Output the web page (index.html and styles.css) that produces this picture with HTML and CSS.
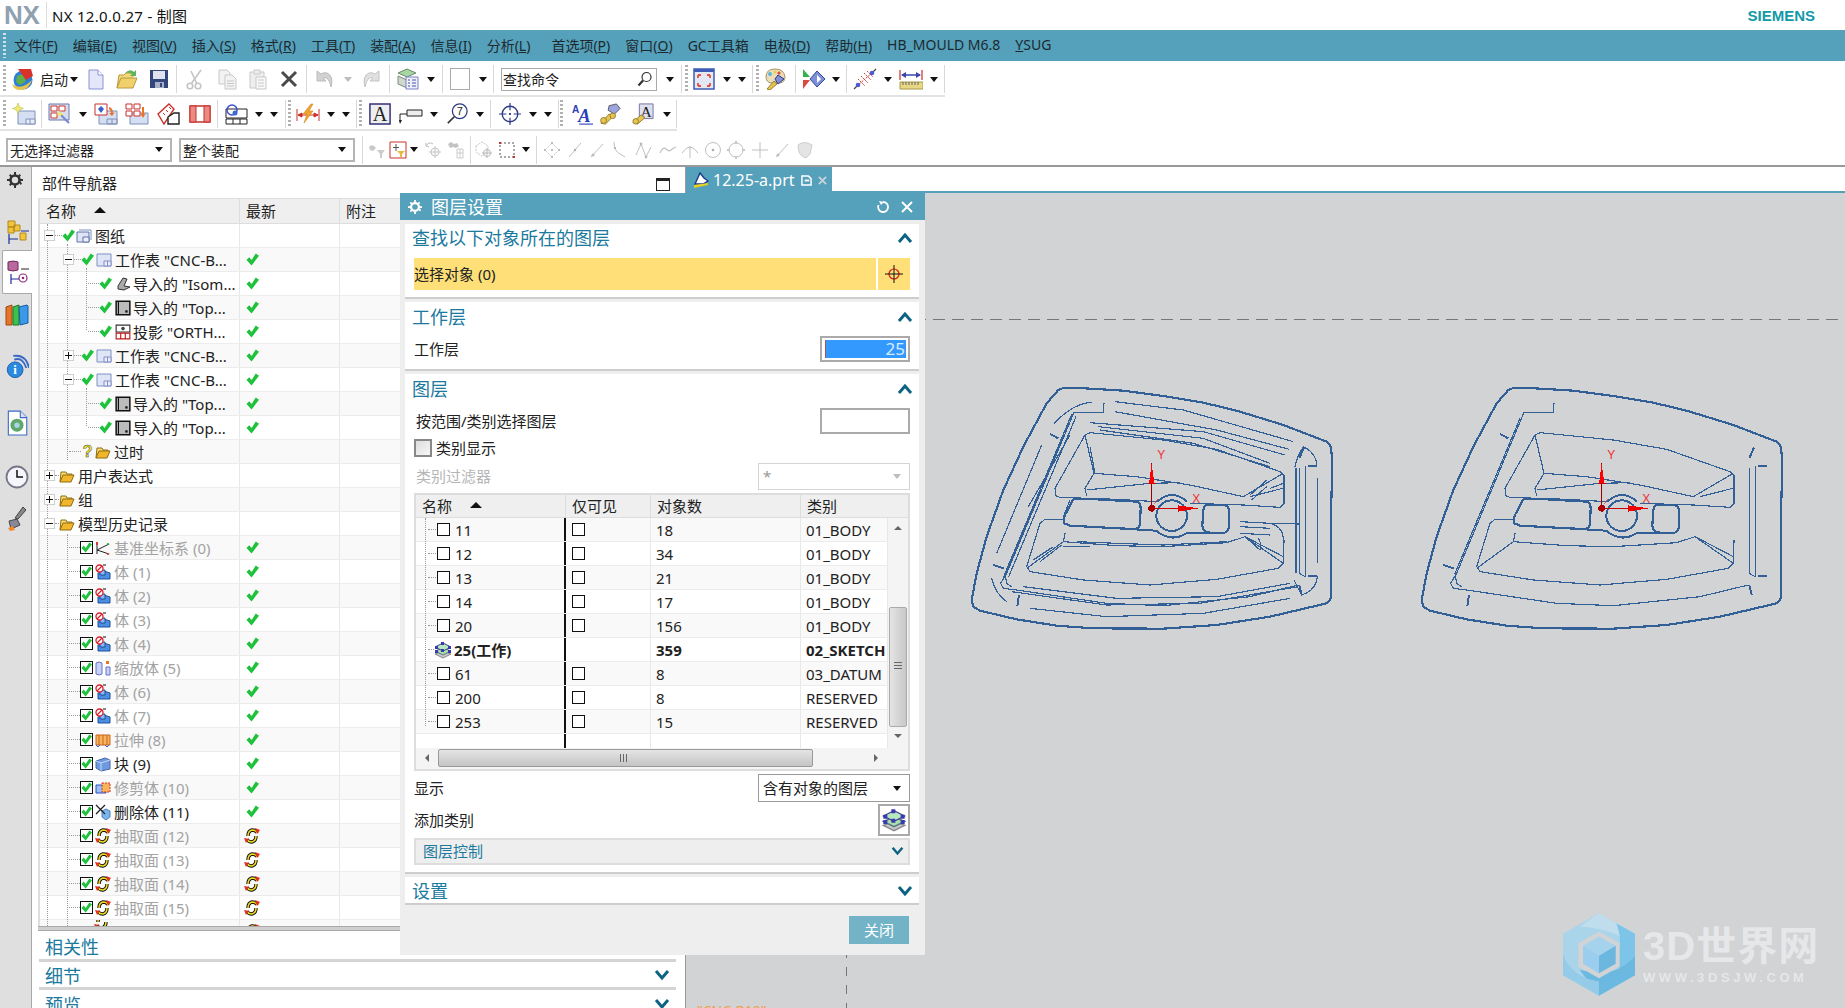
FILE: index.html
```html
<!DOCTYPE html>
<html lang="zh">
<head>
<meta charset="utf-8">
<title>NX 12.0.0.27 - 制图</title>
<link rel="stylesheet" href="styles.css">
</head>
<body>
<svg class="sprite" xmlns="http://www.w3.org/2000/svg">
<defs>
<symbol id="start" viewBox="0 0 24 22"><circle cx="12" cy="12" r="9.500" fill="#2f7fd6"/><path d="M6 8q5-3 9 0l-1 6-5 3-4-3z" fill="#5fb04a"/><path d="M7 1l13 0 2 7-7 4z" fill="#d8322a"/><path d="M1 16q9 7 20-4-3 10-12 10-6 0-8-6z" fill="#e8c24a"/></symbol>
<symbol id="new" viewBox="0 0 22 22"><path d="M4 2h9l5 5v14H4z" fill="#e4e7fa" stroke="#8d92d4"/><path d="M13 2v5h5" fill="#fff" stroke="#8d92d4"/></symbol>
<symbol id="open" viewBox="0 0 22 22"><path d="M1 20l2-13h5l2-2h7v4" fill="#f4d77a" stroke="#b89a3c"/><path d="M1 20h16l4-10H5z" fill="#f1d06c" stroke="#b89a3c"/><path d="M9 5q5-5 9-1l2-2v6h-6l2-2q-3-2-7-1z" fill="#5fb35a"/></symbol>
<symbol id="save" viewBox="0 0 22 22"><path d="M2 2h18v18H2z" fill="#33477f"/><path d="M5 3h12v8H5z" fill="#dfe3ee"/><path d="M7 14h9v6H7z" fill="#a9b2c9"/><path d="M12 15h2v4h-2z" fill="#33477f"/></symbol>
<symbol id="cut" viewBox="0 0 22 22"><g fill="none" stroke="#c4c4c4" stroke-width="1.600"><circle cx="6" cy="18" r="2.800"/><circle cx="14" cy="18" r="2.800"/><path d="M7 16L17 2M13 16L7 3"/></g></symbol>
<symbol id="copy" viewBox="0 0 22 22"><g fill="#f2f2f2" stroke="#c8c8c8"><path d="M3 2h8l3 3v11H3z"/><path d="M9 7h7l4 4v10H9z"/><path d="M11 13h7M11 15.500h7M11 18h7" fill="none"/></g></symbol>
<symbol id="paste" viewBox="0 0 22 22"><g fill="#eee" stroke="#c8c8c8"><path d="M3 4h14v16H3z"/><path d="M7 2h6v4H7z"/><path d="M9 9h10v12H9z" fill="#f8f8f8"/><path d="M11 12h6M11 15h6M11 18h6" fill="none"/></g></symbol>
<symbol id="del" viewBox="0 0 22 22"><path d="M4 4l14 14M18 4L4 18" stroke="#4a4a4a" stroke-width="3"/></symbol>
<symbol id="undo" viewBox="0 0 22 22"><path d="M3 3v10h9l-3-3q6-2 8 9 3-11-4-14-3-1-6 1z" fill="#d2d2d2" stroke="#bbb"/></symbol>
<symbol id="redo" viewBox="0 0 22 22"><path d="M19 3v10h-9l3-3q-6-2-8 9-3-11 4-14 3-1 6 1z" fill="#e0e0e0" stroke="#c4c4c4"/></symbol>
<symbol id="layers" viewBox="0 0 22 22"><path d="M1 5l9-4 9 4-9 4z" fill="#a8d6a0" stroke="#6a8a70"/><path d="M1 8l9 4 3-1v8l-3 1-9-4z" fill="#cfd8cf" stroke="#7a8a7a"/><path d="M9 9h12v12H9z" fill="#eef0fb" stroke="#7b80c4"/><path d="M11 12h2M15 12h4M11 15h2M15 15h4M11 18h2M15 18h4" stroke="#4a55a8"/></symbol>
<symbol id="mag" viewBox="0 0 16 16"><circle cx="9.500" cy="6" r="4.500" fill="#fff" stroke="#333" stroke-width="1.200"/><path d="M6 9.500L1.500 14.500" stroke="#333" stroke-width="2.200"/></symbol>
<symbol id="fit" viewBox="0 0 22 22"><path d="M1 1h20v20H1z" fill="#e3e8f4" stroke="#3f5cb6" stroke-width="1.500"/><path d="M1 1h20v3H1z" fill="#3f5cb6"/><path d="M5 7h3M5 7v3M17 7h-3M17 7v3M5 18h3M5 18v-3M17 18h-3M17 18v-3" stroke="#e2503a" stroke-width="1.800" fill="none"/></symbol>
<symbol id="palette" viewBox="0 0 24 22"><path d="M2 9q0-8 9-8t10 8q0 5-5 6-5-2-9 0-5-1-5-6z" fill="#ecdcb8" stroke="#a89668"/><circle cx="6" cy="6" r="2" fill="#57b8e0"/><circle cx="11" cy="4" r="1.600" fill="#e8d14a"/><circle cx="15" cy="5" r="1.600" fill="#d84a4a"/><path d="M14 7l6 4-6 5-3-5z" fill="#7f8fd8" stroke="#333c86"/><path d="M3 21l7-8 3 3-7 6z" fill="#e6c14e" stroke="#9b8230"/></symbol>
<symbol id="play" viewBox="0 0 24 22"><path d="M1 1l7 8H1z" fill="#33b44a"/><path d="M1 12h7l-7 9z" fill="#d94a42"/><path d="M15 3l8 8-8 8-7-8z" fill="#7c8fd8" stroke="#39459a"/><path d="M15 7l4 4-4 4z" fill="#fff"/></symbol>
<symbol id="grid" viewBox="0 0 24 22"><path d="M4 18L20 4M8 8l7 7M5 11l7 7M11 5l7 7M14 3l6 6" stroke="#d8403a" stroke-dasharray="2 1" fill="none"/><path d="M1 21l4-4M19 5l4-4" stroke="#444" stroke-width="1.200"/><circle cx="5" cy="17" r="2.300" fill="#4e5ad0"/><circle cx="19" cy="5" r="2.300" fill="#4e5ad0"/></symbol>
<symbol id="ruler" viewBox="0 0 24 22"><path d="M1 2v10M23 2v10" stroke="#c9302a" stroke-width="1.200"/><path d="M3 7h18" stroke="#3a46b0" stroke-width="1.500"/><path d="M2 7l5-3v6zM22 7l-5-3v6z" fill="#3a46b0"/><path d="M1 14h23v7H1z" fill="#e8d883" stroke="#a89a4c"/><path d="M4 14v3M7 14v3M10 14v3M13 14v3M16 14v3M19 14v3" stroke="#666"/></symbol>
<symbol id="newsheet" viewBox="0 0 24 22"><path d="M6 8h17v13H6z" fill="#d5dff2" stroke="#7e90bb"/><path d="M14 16h9v5h-9zM18 16v5" fill="#e7ecf7" stroke="#7e90bb"/><path d="M6 0l1.500 4 4 1.500-4 1.500L6 11 4.500 7 .5 5.500l4-1.500z" fill="#f2ea6a" stroke="#a8b35a" stroke-width=".5"/></symbol>
<symbol id="s1" viewBox="0 0 24 22"><path d="M1 1h20v16H1z" fill="#d8ddf0" stroke="#6b78b0"/><path d="M3 3h6v5H3zM11 3h6v5h-6zM3 10h6v5H3z" fill="#fff" stroke="#d0392f"/><path d="M11 10l10 10" stroke="#7a8ad8" stroke-width="2.200"/><path d="M12 7l1 3 3 1-3 1-1 3-1-3-3-1 3-1z" fill="#f2ea6a"/></symbol>
<symbol id="s2" viewBox="0 0 24 22"><path d="M5 8h18v13H5z" fill="#d5dff2" stroke="#7e90bb"/><path d="M1 1h12v11H1z" fill="#fff" stroke="#c9302a"/><path d="M4 6l3-3 3 3-3 4z" fill="#3a5ec8"/><path d="M15 4q4 1 4 6l2-1-3 4-3-3 2 0q0-3-2-4z" fill="#e8742a"/><path d="M13 16h10v5H13zM18 16v5" fill="none" stroke="#7e90bb"/></symbol>
<symbol id="s3" viewBox="0 0 24 22"><path d="M5 10h18v11H5z" fill="#d5dff2" stroke="#7e90bb"/><path d="M1 1h6v5H1zM9 1h6v5H9zM1 8h6v5H1zM9 8h6v5H9z" fill="#fff" stroke="#c9302a"/><path d="M19 4v7l2-1-3 5-3-5 2 1V4z" fill="#e8742a"/></symbol>
<symbol id="s4" viewBox="0 0 24 22"><path d="M1 11L12 1l5 5L7 21z" fill="#fff" stroke="#c9302a" stroke-width="1.400"/><path d="M6 10l2 2M9 7l2 2M12 4l2 2" stroke="#c9302a"/><path d="M11 21v-7l6-4h5v11z" fill="#fff" stroke="#222" stroke-width="1.400"/></symbol>
<symbol id="s5" viewBox="0 0 24 22"><path d="M2 3h20v16H2z" fill="#fff" stroke="#c9302a" stroke-width="1.400"/><path d="M2 3h6v16H2zM16 3h6v16h-6z" fill="#e98a84" stroke="#c9302a"/></symbol>
<symbol id="s6" viewBox="0 0 24 22"><path d="M2 6h21v9H2zM2 16h21v5H2zM9 16v5M16 16v5" fill="#fff" stroke="#222"/><circle cx="8" cy="7" r="5" fill="none" stroke="#3a4ec8" stroke-width="1.500"/><circle cx="11" cy="10" r="2.500" fill="#3a6ad0"/></symbol>
<symbol id="bolt" viewBox="0 0 24 22"><path d="M1 6v12M23 6v12" stroke="#c9302a"/><path d="M2 12h20M2 12l4-2v4zM22 12l-4-2v4z" stroke="#c9302a" fill="#c9302a"/><path d="M15 1L7 11h4l-3 9 9-12h-4l4-7z" fill="#f0a42c" stroke="#d8821c" stroke-width=".6"/></symbol>
<symbol id="abox" viewBox="0 0 24 24"><path d="M1 1h22v22H1z" fill="#eee" stroke="#34307a" stroke-width="1.600"/><text x="12" y="20" text-anchor="middle" font-family="Liberation Serif" font-size="22" fill="#222">A</text></symbol>
<symbol id="leader" viewBox="0 0 24 22"><path d="M8 7h15v6H8z" fill="#eee" stroke="#222"/><path d="M8 11H1v8" stroke="#222" fill="none"/><path d="M1 21l-1-4h3z" fill="#222"/></symbol>
<symbol id="balloon" viewBox="0 0 24 24"><circle cx="15" cy="9" r="8" fill="#fff" stroke="#2e3a86" stroke-width="1.400"/><text x="15" y="13" text-anchor="middle" font-family="Liberation Sans" font-size="12" fill="#222">7</text><path d="M9 15L2 22" stroke="#333" stroke-width="1.800"/></symbol>
<symbol id="target" viewBox="0 0 24 24"><circle cx="12" cy="12" r="8.500" fill="none" stroke="#2e3a86" stroke-width="1.500"/><path d="M12 0v8M12 16v8M0 12h8M16 12h8" stroke="#2e3a86" stroke-width="1.300"/><path d="M11 11h2v2h-2z" fill="#2e3a86"/></symbol>
<symbol id="aa" viewBox="0 0 24 24"><text x="1" y="11" font-family="Liberation Sans" font-weight="700" font-size="11" fill="#2a3db8">A</text><text x="8" y="21" font-family="Liberation Serif" font-style="italic" font-weight="700" font-size="20" fill="#2a3db8">A</text><path d="M9 23h15" stroke="#2a3db8" stroke-width="1.200"/></symbol>
<symbol id="wrench" viewBox="0 0 24 24"><path d="M11 3l8-2 4 5-6 6-7-4z" fill="#9aa4e0" stroke="#555"/><path d="M2 22l9-10 4 3-8 8z" fill="#e9c550" stroke="#8e7a2c"/><circle cx="5" cy="19" r="3.200" fill="#e9c550" stroke="#8e7a2c"/><circle cx="15" cy="14" r="3" fill="#e9c550" stroke="#8e7a2c"/></symbol>
<symbol id="wrencha" viewBox="0 0 24 24"><path d="M8 1h15v16H8z" fill="#dfe0ee" stroke="#6b6b9a"/><text x="15.500" y="15" text-anchor="middle" font-family="Liberation Serif" font-size="17" fill="#222">A</text><path d="M1 21l9-8 4 3-8 7z" fill="#e9c550" stroke="#8e7a2c"/><circle cx="4" cy="20" r="3" fill="#e9c550" stroke="#8e7a2c"/></symbol>
<symbol id="g1" viewBox="0 0 18 18"><path d="M1 6q2-3 5-1l2 2-3 3-3-1z" fill="#c8c8c8"/><path d="M9 9h8l-3 4v4h-2v-4z" fill="#ccc"/></symbol>
<symbol id="g2" viewBox="0 0 18 18"><path d="M1 1h16v16H1z" fill="#fff" stroke="#c9302a"/><path d="M7 3v7M4 6.500h6" stroke="#555"/><path d="M8 10h8l-3 3v3h-2v-3z" fill="#e9b93a"/></symbol>
<symbol id="g3" viewBox="0 0 18 18"><path d="M2 5q3-5 7-2M2 5l3 1M2 5V2" stroke="#bbb" fill="none"/><circle cx="11" cy="11" r="4" fill="none" stroke="#c4c4c4"/><path d="M11 5v12M5 11h12" stroke="#c4c4c4"/></symbol>
<symbol id="g4" viewBox="0 0 18 18"><path d="M1 3l3-2 3 2 3-1 2 3-3 2-3-1-3 1z" fill="#c4c4c4"/><path d="M10 8h6v9h-6zM10 12h6M13 8v9" fill="none" stroke="#ccc"/></symbol>
<symbol id="g5" viewBox="0 0 18 18"><path d="M1 5l6-4 6 4v6l-6 4-6-4z" fill="none" stroke="#c8c8c8" stroke-dasharray="2 1"/><circle cx="12" cy="12" r="3.500" fill="none" stroke="#bbb"/><path d="M12 7v10M7 12h10" stroke="#bbb"/></symbol>
<symbol id="g6" viewBox="0 0 18 18"><path d="M2 2h14v14H2z" fill="none" stroke="#555" stroke-dasharray="2 2"/><path d="M1 1h2v2H1zM15 15h2v2h-2z" fill="#c9302a"/></symbol>
<symbol id="g7" viewBox="0 0 18 18"><path d="M9 2l7 7-7 7-7-7z" fill="none" stroke="#ccc" stroke-dasharray="2 1"/><path d="M8 1h2v2H8zM1 8h2v2H1zM15 8h2v2h-2zM8 15h2v2H8zM8 8h2v2H8z" fill="#bbb"/></symbol>
<symbol id="g8" viewBox="0 0 18 18"><path d="M3 16L15 2" stroke="#c0c0c0"/><circle cx="9" cy="9" r="1.200" fill="#aaa"/></symbol>
<symbol id="g9" viewBox="0 0 18 18"><path d="M4 1q0 9 6 12l5 3" stroke="#c0c0c0" fill="none"/><circle cx="5" cy="7" r="1" fill="#aaa"/></symbol>
<symbol id="g10" viewBox="0 0 18 18"><path d="M1 14L6 3l5 13 5-10" stroke="#c0c0c0" fill="none"/><circle cx="6" cy="3" r="1.400" fill="#bbb"/><circle cx="11" cy="16" r="1.400" fill="#bbb"/></symbol>
<symbol id="g11" viewBox="0 0 18 18"><path d="M1 12q3-7 6-4t5 1 5-3" stroke="#c0c0c0" fill="none" stroke-width="1.200"/></symbol>
<symbol id="g12" viewBox="0 0 18 18"><path d="M1 12Q9 0 17 12M9 5v12" stroke="#c0c0c0" fill="none"/></symbol>
<symbol id="g13" viewBox="0 0 18 18"><circle cx="9" cy="9" r="7.500" fill="none" stroke="#c0c0c0"/><circle cx="9" cy="9" r="1.300" fill="#aaa"/></symbol>
<symbol id="g14" viewBox="0 0 18 18"><circle cx="9" cy="9" r="7" fill="none" stroke="#c0c0c0"/><path d="M8 0h2v3H8zM8 15h2v3H8zM0 8h3v2H0zM15 8h3v2h-3z" fill="#c8c8c8"/></symbol>
<symbol id="g15" viewBox="0 0 18 18"><path d="M9 1v16M1 9h16" stroke="#c0c0c0"/></symbol>
<symbol id="g16" viewBox="0 0 18 18"><path d="M3 16L15 3" stroke="#c0c0c0"/><circle cx="5" cy="14" r="1.500" fill="#bbb"/></symbol>
<symbol id="g17" viewBox="0 0 18 18"><path d="M2 4q6-5 14 0l-2 9-4 4q-8-2-8-13z" fill="#e4e4e4" stroke="#ccc"/></symbol>

<symbol id="ok" viewBox="0 0 14 14"><path d="M.5 7.500l3-3 2.500 3L10.500.5 14 3 6 13.500z" fill="#1fc23d"/></symbol>
<symbol id="folder" viewBox="0 0 16 14"><path d="M1 13L2 3h5l1 2h5v2" fill="#f8dc78" stroke="#8c6d10"/><path d="M1 13h11l3-7H4z" fill="#f2b62c" stroke="#8c6d10"/></symbol>
<symbol id="sheet" viewBox="0 0 16 14"><path d="M1 1h14v12H1z" fill="#e0e5f5" stroke="#7f8fc4"/><path d="M8 8h7v5H8zM11.500 8v5" fill="#eef" stroke="#7f8fc4"/></symbol>
<symbol id="sheets" viewBox="0 0 16 14"><path d="M3 1h12v10" fill="none" stroke="#7f8fc4"/><path d="M1 3h12v10H1z" fill="#e0e5f5" stroke="#5f70a8"/><path d="M7 8h6v5H7z" fill="#eef" stroke="#5f70a8"/></symbol>
<symbol id="iso" viewBox="0 0 16 14"><path d="M3 9l5-8 4 1-3 7 6 1-6 3-6-1z" fill="#aaa" stroke="#333"/></symbol>
<symbol id="view" viewBox="0 0 14 14"><path d="M1 1h12v12H1z" fill="#bbb" stroke="#111" stroke-width="1.300"/><path d="M3 1v12" stroke="#111"/><path d="M9 9h2v2H9z" fill="#111"/></symbol>
<symbol id="ortho" viewBox="0 0 14 14"><path d="M1 1h12v6H1z" fill="#fff" stroke="#333"/><path d="M1 8h12v5H1zM5 8v5M9 8v5" fill="#fff" stroke="#c01818"/><circle cx="7" cy="4" r="1.600" fill="#444"/></symbol>
<symbol id="q" viewBox="0 0 12 16"><text x="6" y="14.500" text-anchor="middle" font-family="Liberation Sans" font-weight="700" font-size="18" fill="#efe02a" stroke="#444" stroke-width=".5">?</text></symbol>
<symbol id="datum" viewBox="0 0 16 14"><path d="M2 1v12M2 9l12-6M2 9l12 4" stroke="#222" fill="none"/><path d="M1 1h2v3H1z" fill="#d33"/><path d="M12 2l3 1-3 1z" fill="#2a2"/><path d="M12 12l3 1-3 1z" fill="#d33"/></symbol>
<symbol id="body" viewBox="0 0 16 16"><path d="M3 9l6-2 6 2v6H3z" fill="#4b8fe0" stroke="#1f4f9c"/><path d="M5 6h5v5H5z" fill="#8dbaf0" stroke="#1f4f9c"/><circle cx="4.500" cy="4.500" r="3.500" fill="#fff" stroke="#d8202a" stroke-width="1.300"/><path d="M2 7l5-5" stroke="#d8202a" stroke-width="1.300"/><path d="M8 1h3" stroke="#111"/></symbol>
<symbol id="scale" viewBox="0 0 16 16"><path d="M1 3q3-2 6 0v11q-3 2-6 0z" fill="#c9d2f8" stroke="#6372c8"/><path d="M11 7h4v8h-4z" fill="#c9d2f8" stroke="#6372c8"/><path d="M11 1h3v3h-3z" fill="#e8742a"/></symbol>
<symbol id="ext" viewBox="0 0 16 16"><path d="M1 3h14v10H1z" fill="#f6b45c" stroke="#c8641c"/><path d="M4 3v10M8 3v10M12 3v10" stroke="#c8641c"/><path d="M1 13l2 2 2-2M10 13l2 2 2-2" stroke="#3a5ec8" fill="none"/></symbol>
<symbol id="block" viewBox="0 0 16 16"><path d="M1 5l9-3 5 2v9l-9 2-5-3z" fill="#6e9ae0" stroke="#4468a8"/><path d="M1 5l5 2 9-3" fill="none" stroke="#c8d8f4"/><path d="M6 7v8" stroke="#c8d8f4"/></symbol>
<symbol id="trim" viewBox="0 0 16 14"><path d="M1 4h10v8H1z" fill="#9cc0f0" stroke="#2a4ec8"/><path d="M7 2h8v9H7z" fill="#f6b45c" stroke="#d8302a" stroke-dasharray="2 1"/></symbol>
<symbol id="delb" viewBox="0 0 16 16"><path d="M7 7l4-2 4 2v6l-4 3-4-3z" fill="#7cb4ec" stroke="#4a80bc"/><path d="M1 1l9 9M10 1L1 10" stroke="#222" stroke-width="1.300"/></symbol>
<symbol id="upd" viewBox="0 0 16 16"><path d="M4 8q0-5 4-6 4 0 5 3M12 8q0 5-4 6-4 0-5-3" fill="none" stroke="#111" stroke-width="3.400"/><path d="M4 8q0-5 4-6 4 0 5 3M12 8q0 5-4 6-4 0-5-3" fill="none" stroke="#f0dc20" stroke-width="1.500"/><path d="M11 0l5 2-3 4zM0 10l5 1-3 4z" fill="#e0301c"/></symbol>
<symbol id="stack" viewBox="0 0 18 18"><path d="M1 13l8-3 8 3-8 4z" fill="#c8c8c8" stroke="#888"/><path d="M1 10l8-3 8 3-8 4z" fill="#a8e0a8" stroke="#578"/><path d="M1 6l8-4 8 4-8 4z" fill="#b8e8c0" stroke="#448"/><path d="M1 5h3v3H1zM14 5h3v3h-3zM7 1h3v3H7zM7 8h3v3H7zM1 9h3v3H1zM14 9h3v3h-3z" fill="#3a3ab0"/></symbol>
<symbol id="cross" viewBox="0 0 20 20"><circle cx="10" cy="10" r="5" fill="none" stroke="#d81818" stroke-width="1.200"/><path d="M10 1v18M1 10h18" stroke="#111"/></symbol>
<symbol id="gear" viewBox="0 0 16 16"><circle cx="8" cy="8" r="4.500" fill="none" stroke="currentColor" stroke-width="2.600"/><path d="M7 0h2v3H7zM7 13h2v3H7zM0 7h3v2H0zM13 7h3v2h-3zM2 3.400L3.400 2l2 2L4 5.400zM12 10.600l1.400-1.400 1.600 2.400-1.400 1.400zM2 12.600L4 10.600l1.400 1.400-2 2zM10.600 4l2-2 1.400 1.400-2 2z" fill="currentColor"/></symbol>
<symbol id="chevup" viewBox="0 0 16 12"><path d="M2 10l6-7 6 7" fill="none" stroke="#0d6482" stroke-width="3"/></symbol>
<symbol id="chevdn" viewBox="0 0 16 12"><path d="M2 2l6 7 6-7" fill="none" stroke="#0d6482" stroke-width="3"/></symbol>

<symbol id="s-assy" viewBox="0 0 24 26"><path d="M3 2h7v6H3zM9 6h6v6H9zM3 8h6v6H3z" fill="#f2c43a" stroke="#b08a20"/><path d="M15 14h6v7h-6z" fill="#f2c43a" stroke="#b08a20"/><path d="M4 15v10M4 20h9M16 12h8" stroke="#1a2a9a" stroke-width="1.200"/></symbol>
<symbol id="s-cons" viewBox="0 0 24 26"><path d="M2 3q5-2 10 0v8q-5 2-10 0z" fill="#b86a9c" stroke="#6a2a5a"/><path d="M15 10h8" stroke="#222"/><path d="M5 15v10M5 20h8" stroke="#1a2a9a" stroke-width="1.200"/><circle cx="17" cy="19" r="4" fill="none" stroke="#8a2a7a" stroke-width="1.200"/><circle cx="17" cy="19" r="1.300" fill="#8a2a7a"/></symbol>
<symbol id="s-books" viewBox="0 0 24 24"><path d="M1 4l6-2v20H1z" fill="#e8742a" stroke="#9a4a10"/><path d="M8 4l6-2v20H8z" fill="#3cc24a" stroke="#1a7a24"/><path d="M14 4l8-2 1 1v17l-8 2z" fill="#3a9ae8" stroke="#1a5aa8"/></symbol>
<symbol id="s-info" viewBox="0 0 26 26"><circle cx="11" cy="16" r="8.500" fill="#2a8ae0" stroke="#1a5aa8"/><text x="11" y="21" text-anchor="middle" font-family="Liberation Serif" font-weight="700" font-size="14" fill="#fff">i</text><path d="M10 5q9-3 13 9M9 1q14-2 17 13" fill="none" stroke="#3a68c8" stroke-width="2"/></symbol>
<symbol id="s-doc" viewBox="0 0 20 24"><path d="M2 1h11l6 6v16H2z" fill="#fff" stroke="#3a6ac8"/><path d="M13 1v6h6" fill="#dde" stroke="#3a6ac8"/><circle cx="10" cy="14" r="6" fill="#5fa86a"/><circle cx="10" cy="14" r="2.500" fill="#a8d4e8"/></symbol>
<symbol id="s-clock" viewBox="0 0 24 24"><circle cx="12" cy="12" r="10.500" fill="#f4f6fb" stroke="#778"  stroke-width="1.800"/><path d="M12 5v7h6" fill="none" stroke="#111" stroke-width="1.500"/></symbol>
<symbol id="s-tool" viewBox="0 0 20 26"><path d="M16 1l3 3-8 9-3-1z" fill="#888" stroke="#444"/><path d="M2 15l8-2 3 6-9 4z" fill="#889" stroke="#444"/><path d="M1 22l5-2 2 4-5 1z" fill="#f08a2c"/></symbol>

<symbol id="m-core" viewBox="0 0 1350 900">
<g fill="none" stroke="#335f97">
<path stroke-width="6.500" d="M337 85L405 85 520 92 640 108 760 128 860 152 1000 195 1130 245 1143 260 1147 310 1142 500 1143 715 1130 730 960 770 800 795 640 806 430 805 320 797 200 778 90 752 70 740 65 720 80 640 110 530 160 390 220 260 290 130 325 90Z"/>
<path stroke-width="6.500" d="M370 418L440 418 560 425Q572 430 572 445L570 495Q565 507 550 507L470 503 360 497 343 490Q338 480 345 465Z"/>
<path stroke-width="6.500" d="M770 435L825 435Q838 440 838 455L836 505Q830 520 815 520L770 517Q757 510 757 495L760 450Q762 437 770 435Z"/>
<circle stroke-width="6" cx="665" cy="467" r="46"/>
<path stroke-width="6" d="M622 425Q665 385 712 425M470 503L618 512Q665 550 712 518L800 520"/>
<path stroke-width="3.500" d="M405 225L420 218 640 240 800 268 990 335 1002 345 1002 430 990 442 880 435 720 430M405 225L315 385 318 408 330 412 500 418 620 425M405 225L432 340 405 385 410 408M432 340L560 350 720 375 880 410M270 490L285 478 345 480M270 490L230 620 240 635 400 660 600 675 800 658 985 625 1000 610 1002 540M340 545L500 557 640 560 830 548 885 530M340 545L345 520M340 545L230 625M885 530L1000 610M885 530L1000 590M880 410L1000 340M900 410L998 385M410 390L600 370 690 368"/>
<path stroke-width="3.500" d="M372 157L460 158 462 128M372 157L170 640 152 670 160 685 200 690 470 730 640 737 900 710 1045 675M360 175L165 640 170 670 185 680"/>
<path stroke-width="6" d="M300 222L325 235M130 615L162 625M207 705L202 738M1062 262L1048 295M1075 318L1100 318M1075 648L1100 648M1048 675L1055 705"/>
<path stroke-width="3.500" d="M1048 325L1048 640 1065 650M1066 318L1066 650"/>
</g>
</symbol>
<symbol id="m-triad" viewBox="0 0 1350 900">
<path d="M605 445V310" stroke="#900" stroke-width="3"/><path d="M605 445H745" stroke="#c00" stroke-width="3"/>
<path d="M597 370L605 310 613 370Z" fill="#f00"/><path d="M595 369H617" stroke="#c00" stroke-width="3"/>
<path d="M685 436L745 445 685 455Z" fill="#e00"/>
<circle cx="605" cy="445" r="10" fill="#a00"/>
<path d="M613 432L622 418" stroke="#e33" stroke-width="2"/>
<text x="634" y="298" text-anchor="middle" font-family="Liberation Sans" font-size="36" fill="#f03030">Y</text>
<text x="739" y="428" text-anchor="middle" font-family="Liberation Sans" font-size="36" fill="#f03030">X</text>
</symbol>
</defs>
</svg>

<div class="app">
  <header class="titlebar">
    <span class="nxlogo">NX</span>
    <span class="nxsep"></span>
    <span class="apptitle">NX 12.0.0.27 - 制图</span>
    <span class="siemens">SIEMENS</span>
  </header>
  <nav class="menubar">
    <span class="menugrip"></span>
    <span class="mi">文件(<u>F</u>)</span><span class="mi">编辑(<u>E</u>)</span><span class="mi">视图(<u>V</u>)</span><span class="mi">插入(<u>S</u>)</span><span class="mi">格式(<u>R</u>)</span><span class="mi">工具(<u>T</u>)</span><span class="mi">装配(<u>A</u>)</span><span class="mi">信息(<u>I</u>)</span><span class="mi">分析(<u>L</u>)</span><span class="mi m-pref">首选项(<u>P</u>)</span><span class="mi">窗口(<u>O</u>)</span><span class="mi">GC工具箱</span><span class="mi">电极(<u>D</u>)</span><span class="mi">帮助(<u>H</u>)</span><span class="mi">HB_MOULD M6.8</span><span class="mi"><u>Y</u>SUG</span>
  </nav>

  <div class="tb tb1">
    <i class="grip m3"></i><svg class="ic w24 m5"><use href="#start"/></svg><span class="tbtext m5">启动</span><i class="dd m2"></i>
    <svg class="ic m7"><use href="#new"/></svg><svg class="ic m9"><use href="#open"/></svg><svg class="ic m10"><use href="#save"/></svg><i class="sep m6"></i>
    <svg class="ic m7"><use href="#cut"/></svg><svg class="ic m10"><use href="#copy"/></svg><svg class="ic m9"><use href="#paste"/></svg><svg class="ic m9"><use href="#del"/></svg><i class="sep m6"></i>
    <svg class="ic m7"><use href="#undo"/></svg><i class="dd gray m8"></i><svg class="ic m8"><use href="#redo"/></svg><i class="sep m7"></i>
    <svg class="ic m7"><use href="#layers"/></svg><i class="dd m8"></i><i class="sep m7"></i>
    <span class="blankbox m7"></span><i class="dd m9"></i><i class="sep m6"></i>
    <span class="cmdsearch m7"><span>查找命令</span><svg class="magic"><use href="#mag"/></svg></span><i class="dd m9"></i><i class="sep m7"></i><i class="grip m3"></i>
    <svg class="ic m5"><use href="#fit"/></svg><i class="dd m8"></i><i class="dd m7"></i><i class="sep m6"></i><i class="grip m3"></i>
    <svg class="ic w24 m5"><use href="#palette"/></svg><i class="sep m7"></i><svg class="ic w24 m6"><use href="#play"/></svg><i class="dd m6"></i><i class="sep m6"></i>
    <svg class="ic w24 m6"><use href="#grid"/></svg><i class="dd m7"></i><svg class="ic w24 m7"><use href="#ruler"/></svg><i class="dd m7"></i><i class="sep m6"></i>
  </div>

  <div class="tb tb2">
    <i class="grip m3"></i><svg class="ic w24 m6"><use href="#newsheet"/></svg><i class="sep m5"></i>
    <svg class="ic w24 m6"><use href="#s1"/></svg><i class="dd m7"></i><svg class="ic w24 m7"><use href="#s2"/></svg><svg class="ic w24 m7"><use href="#s3"/></svg><svg class="ic w24 m8"><use href="#s4"/></svg><svg class="ic w24 m7"><use href="#s5"/></svg><i class="sep m5"></i>
    <svg class="ic w24 m6"><use href="#s6"/></svg><i class="dd m7"></i><i class="dd m7"></i><i class="sep m7"></i><i class="grip m2"></i>
    <svg class="ic w24 m5"><use href="#bolt"/></svg><i class="dd m7"></i><i class="dd m7"></i><i class="sep m6"></i><i class="grip m2"></i>
    <svg class="ic w24 m6"><use href="#abox"/></svg><svg class="ic w24 m7"><use href="#leader"/></svg><i class="dd m7"></i><svg class="ic w24 m7"><use href="#balloon"/></svg><i class="dd m7"></i><i class="sep m6"></i>
    <svg class="ic w24 m7"><use href="#target"/></svg><i class="dd m7"></i><i class="dd m7"></i><i class="sep m6"></i><i class="grip m1"></i>
    <svg class="ic w24 m7"><use href="#aa"/></svg><svg class="ic w24 m4"><use href="#wrench"/></svg><svg class="ic w24 m9"><use href="#wrencha"/></svg><i class="dd m8"></i><i class="sep m5"></i>
  </div>

  <div class="tb tb3">
    <span class="sel sel1 m6">无选择过滤器<i class="dd"></i></span><span class="sel sel2 m7">整个装配<i class="dd"></i></span><i class="sep m7"></i>
    <svg class="ig m5"><use href="#g1"/></svg><svg class="ig m3"><use href="#g2"/></svg><i class="dd m3"></i><svg class="ig m6"><use href="#g3"/></svg><svg class="ig m5"><use href="#g4"/></svg><i class="sep m5"></i>
    <svg class="ig m4"><use href="#g5"/></svg><svg class="ig m5"><use href="#g6"/></svg><i class="dd m6"></i><i class="sep m6"></i>
    <svg class="ig m6"><use href="#g7"/></svg><svg class="ig m5"><use href="#g8"/></svg><svg class="ig m4"><use href="#g16"/></svg><svg class="ig m4"><use href="#g9"/></svg><svg class="ig m7"><use href="#g10"/></svg><svg class="ig m6"><use href="#g11"/></svg><svg class="ig m4"><use href="#g12"/></svg><svg class="ig m5"><use href="#g13"/></svg><svg class="ig m5"><use href="#g14"/></svg><svg class="ig m6"><use href="#g15"/></svg><svg class="ig m4"><use href="#g16"/></svg><svg class="ig m5"><use href="#g17"/></svg>
  </div>

  <main class="work">
    <aside class="rail">
      <svg class="railgear"><use href="#gear"/></svg>
      <span class="railbtn rb-assy"><svg><use href="#s-assy"/></svg></span>
      <span class="railbtn rb-active"><svg><use href="#s-cons"/></svg></span>
      <span class="railbtn rb-books"><svg><use href="#s-books"/></svg></span>
      <span class="railbtn rb-info"><svg><use href="#s-info"/></svg></span>
      <span class="railbtn rb-doc"><svg><use href="#s-doc"/></svg></span>
      <span class="railbtn rb-clock"><svg><use href="#s-clock"/></svg></span>
      <span class="railbtn rb-tool"><svg><use href="#s-tool"/></svg></span>
    </aside>

    <section class="nav">
      <div class="navhead"><span>部件导航器</span><i class="maxbox"></i></div>
      <div class="tree">
        <div class="treehead"><span class="th-name">名称<i class="sortup"></i></span><span class="th-new">最新</span><span class="th-note">附注</span></div>
        <div class="treebody">
          <i class="vl vl0"></i><i class="vl vl1"></i><i class="vl vl2"></i><i class="vl vl3"></i><i class="vl vl4"></i>
          <div class="rows">
            <div class="row"><span class="nm l0"><i class="exp"></i><i class="dot d7"></i><svg class="ok"><use href="#ok"/></svg><svg class="ti ti1"><use href="#sheets"/></svg><span class="tx tx3">图纸</span></span><span class="nw"></span></div>
            <div class="row"><span class="nm l1"><i class="exp"></i><i class="dot d7"></i><svg class="ok"><use href="#ok"/></svg><svg class="ti ti2"><use href="#sheet"/></svg><span class="tx tx3">工作表 "CNC-B...</span></span><span class="nw"><svg class="ok"><use href="#ok"/></svg></span></div>
            <div class="row"><span class="nm l2"><i class="dot d11"></i><svg class="ok"><use href="#ok"/></svg><svg class="ti ti3"><use href="#iso"/></svg><span class="tx tx2">导入的 "Isom...</span></span><span class="nw"><svg class="ok"><use href="#ok"/></svg></span></div>
            <div class="row"><span class="nm l2"><i class="dot d11"></i><svg class="ok"><use href="#ok"/></svg><svg class="ti ti3"><use href="#view"/></svg><span class="tx tx2">导入的 "Top...</span></span><span class="nw"><svg class="ok"><use href="#ok"/></svg></span></div>
            <div class="row"><span class="nm l2"><i class="dot d11"></i><svg class="ok"><use href="#ok"/></svg><svg class="ti ti3"><use href="#ortho"/></svg><span class="tx tx2">投影 "ORTH...</span></span><span class="nw"><svg class="ok"><use href="#ok"/></svg></span></div>
            <div class="row"><span class="nm l1"><i class="exp plus"></i><i class="dot d7"></i><svg class="ok"><use href="#ok"/></svg><svg class="ti ti2"><use href="#sheet"/></svg><span class="tx tx3">工作表 "CNC-B...</span></span><span class="nw"><svg class="ok"><use href="#ok"/></svg></span></div>
            <div class="row"><span class="nm l1"><i class="exp"></i><i class="dot d7"></i><svg class="ok"><use href="#ok"/></svg><svg class="ti ti2"><use href="#sheet"/></svg><span class="tx tx3">工作表 "CNC-B...</span></span><span class="nw"><svg class="ok"><use href="#ok"/></svg></span></div>
            <div class="row"><span class="nm l2"><i class="dot d11"></i><svg class="ok"><use href="#ok"/></svg><svg class="ti ti3"><use href="#view"/></svg><span class="tx tx2">导入的 "Top...</span></span><span class="nw"><svg class="ok"><use href="#ok"/></svg></span></div>
            <div class="row"><span class="nm l2"><i class="dot d11"></i><svg class="ok"><use href="#ok"/></svg><svg class="ti ti3"><use href="#view"/></svg><span class="tx tx2">导入的 "Top...</span></span><span class="nw"><svg class="ok"><use href="#ok"/></svg></span></div>
            <div class="row"><span class="nm lh"><i class="dot d12"></i><svg class="qm"><use href="#q"/></svg><svg class="ti ti2"><use href="#folder"/></svg><span class="tx tx3">过时</span></span><span class="nw"></span></div>
            <div class="row"><span class="nm l0"><i class="exp plus"></i><i class="dot d4"></i><svg class="ti"><use href="#folder"/></svg><span class="tx tx3">用户表达式</span></span><span class="nw"></span></div>
            <div class="row"><span class="nm l0"><i class="exp plus"></i><i class="dot d4"></i><svg class="ti"><use href="#folder"/></svg><span class="tx tx3">组</span></span><span class="nw"></span></div>
            <div class="row"><span class="nm l0"><i class="exp"></i><i class="dot d4"></i><svg class="ti"><use href="#folder"/></svg><span class="tx tx3">模型历史记录</span></span><span class="nw"></span></div>
            <div class="row"><span class="nm lh"><i class="dot d11"></i><i class="cb"><svg class="ok"><use href="#ok"/></svg></i><svg class="ti ti2"><use href="#datum"/></svg><span class="tx tx3 off">基准坐标系 (0)</span></span><span class="nw"><svg class="ok"><use href="#ok"/></svg></span></div>
            <div class="row"><span class="nm lh"><i class="dot d11"></i><i class="cb"><svg class="ok"><use href="#ok"/></svg></i><svg class="ti ti2"><use href="#body"/></svg><span class="tx tx3 off">体 (1)</span></span><span class="nw"><svg class="ok"><use href="#ok"/></svg></span></div>
            <div class="row"><span class="nm lh"><i class="dot d11"></i><i class="cb"><svg class="ok"><use href="#ok"/></svg></i><svg class="ti ti2"><use href="#body"/></svg><span class="tx tx3 off">体 (2)</span></span><span class="nw"><svg class="ok"><use href="#ok"/></svg></span></div>
            <div class="row"><span class="nm lh"><i class="dot d11"></i><i class="cb"><svg class="ok"><use href="#ok"/></svg></i><svg class="ti ti2"><use href="#body"/></svg><span class="tx tx3 off">体 (3)</span></span><span class="nw"><svg class="ok"><use href="#ok"/></svg></span></div>
            <div class="row"><span class="nm lh"><i class="dot d11"></i><i class="cb"><svg class="ok"><use href="#ok"/></svg></i><svg class="ti ti2"><use href="#body"/></svg><span class="tx tx3 off">体 (4)</span></span><span class="nw"><svg class="ok"><use href="#ok"/></svg></span></div>
            <div class="row"><span class="nm lh"><i class="dot d11"></i><i class="cb"><svg class="ok"><use href="#ok"/></svg></i><svg class="ti ti2"><use href="#scale"/></svg><span class="tx tx3 off">缩放体 (5)</span></span><span class="nw"><svg class="ok"><use href="#ok"/></svg></span></div>
            <div class="row"><span class="nm lh"><i class="dot d11"></i><i class="cb"><svg class="ok"><use href="#ok"/></svg></i><svg class="ti ti2"><use href="#body"/></svg><span class="tx tx3 off">体 (6)</span></span><span class="nw"><svg class="ok"><use href="#ok"/></svg></span></div>
            <div class="row"><span class="nm lh"><i class="dot d11"></i><i class="cb"><svg class="ok"><use href="#ok"/></svg></i><svg class="ti ti2"><use href="#body"/></svg><span class="tx tx3 off">体 (7)</span></span><span class="nw"><svg class="ok"><use href="#ok"/></svg></span></div>
            <div class="row"><span class="nm lh"><i class="dot d11"></i><i class="cb"><svg class="ok"><use href="#ok"/></svg></i><svg class="ti ti2"><use href="#ext"/></svg><span class="tx tx3 off">拉伸 (8)</span></span><span class="nw"><svg class="ok"><use href="#ok"/></svg></span></div>
            <div class="row"><span class="nm lh"><i class="dot d11"></i><i class="cb"><svg class="ok"><use href="#ok"/></svg></i><svg class="ti ti2"><use href="#block"/></svg><span class="tx tx3">块 (9)</span></span><span class="nw"><svg class="ok"><use href="#ok"/></svg></span></div>
            <div class="row"><span class="nm lh"><i class="dot d11"></i><i class="cb"><svg class="ok"><use href="#ok"/></svg></i><svg class="ti ti2"><use href="#trim"/></svg><span class="tx tx3 off">修剪体 (10)</span></span><span class="nw"><svg class="ok"><use href="#ok"/></svg></span></div>
            <div class="row"><span class="nm lh"><i class="dot d11"></i><i class="cb"><svg class="ok"><use href="#ok"/></svg></i><svg class="ti ti2"><use href="#delb"/></svg><span class="tx tx3">删除体 (11)</span></span><span class="nw"><svg class="ok"><use href="#ok"/></svg></span></div>
            <div class="row"><span class="nm lh"><i class="dot d11"></i><i class="cb"><svg class="ok"><use href="#ok"/></svg></i><svg class="ti ti2"><use href="#upd"/></svg><span class="tx tx3 off">抽取面 (12)</span></span><span class="nw"><svg class="upd"><use href="#upd"/></svg></span></div>
            <div class="row"><span class="nm lh"><i class="dot d11"></i><i class="cb"><svg class="ok"><use href="#ok"/></svg></i><svg class="ti ti2"><use href="#upd"/></svg><span class="tx tx3 off">抽取面 (13)</span></span><span class="nw"><svg class="upd"><use href="#upd"/></svg></span></div>
            <div class="row"><span class="nm lh"><i class="dot d11"></i><i class="cb"><svg class="ok"><use href="#ok"/></svg></i><svg class="ti ti2"><use href="#upd"/></svg><span class="tx tx3 off">抽取面 (14)</span></span><span class="nw"><svg class="upd"><use href="#upd"/></svg></span></div>
            <div class="row"><span class="nm lh"><i class="dot d11"></i><i class="cb"><svg class="ok"><use href="#ok"/></svg></i><svg class="ti ti2"><use href="#upd"/></svg><span class="tx tx3 off">抽取面 (15)</span></span><span class="nw"><svg class="upd"><use href="#upd"/></svg></span></div>
            <div class="row"><span class="nm lh"><i class="dot d11"></i><svg class="ti ti-last"><use href="#upd"/></svg></span><span class="nw"><svg class="upd"><use href="#upd"/></svg></span></div>
          </div>
        </div>
      </div>
      <div class="splitter"></div>
      <div class="panel panel-first"><span>相关性</span></div>
      <div class="panel"><span>细节</span><svg class="chev"><use href="#chevdn"/></svg></div>
      <div class="panel"><span>预览</span><svg class="chev"><use href="#chevdn"/></svg></div>
    </section>

    <section class="gfx">
      <div class="tabstrip">
        <div class="tab">
          <svg class="tabicon" viewBox="0 0 16 16"><path d="M2 12L7 1l4 5 4 3-5 3z" fill="#fff" stroke="#1a3a8a" stroke-width="1.400"/><path d="M1 13l14-2v2L1 16z" fill="#e8d020"/></svg>
          <span>12.25-a.prt</span>
          <svg class="tabdoc" viewBox="0 0 12 12"><path d="M1 1h7l3 3v7H1z" fill="none" stroke="#fff" stroke-width="1.600"/><path d="M4 6h5" stroke="#fff" stroke-width="2"/></svg>
          <svg class="tabx" viewBox="0 0 10 10"><path d="M1 1l8 8M9 1l-8 8" stroke="#c8d4da" stroke-width="2"/></svg>
        </div>
      </div>
      <div class="canvas">
        <i class="axis-h"></i><i class="axis-v"></i>
        <svg class="model model-a" viewBox="0 0 1350 900">
          <use href="#m-core" width="1350" height="900"/>
          <g fill="none" stroke="#335f97" stroke-width="3.500">
            <path d="M495 125L700 150 1030 245M495 155L800 210 1018 268M420 188L760 215 1005 285M450 210L730 250 960 320M312 190Q370 130 425 127M1035 320Q1040 290 1060 260 1100 280 1100 318M1032 660L1055 705Q1100 690 1102 648M1038 325L1038 640M1102 355L1102 610M960 490L1050 492M870 485L960 490M870 500L960 505M870 520L960 525M960 490Q1000 500 1000 540M220 680L500 715 800 710 1020 670M240 745L470 770 760 760 1020 715M185 695L470 735 750 730 1045 680M140 580L275 255M378 170L176 650M366 162L160 655M360 225L235 440M125 655Q135 700 170 725M380 545L500 550 640 555 830 545M360 420L340 470M420 260L435 340M900 405L950 360M905 420L950 380M885 530L930 570Q935 550 925 535M960 385L1000 370M250 600L310 560M270 605L335 555M445 200L760 235 960 310M340 560L420 560"/>
          </g>
          <use href="#m-triad" width="1350" height="900"/>
        </svg>
        <svg class="model model-b" viewBox="0 0 1350 900">
          <use href="#m-core" width="1350" height="900"/>
          <use href="#m-triad" width="1350" height="900"/>
        </svg>
        <span class="cnctext">"CNC-B10"</span>
        <div class="wm">
          <svg class="wmlogo" viewBox="0 0 216 248">
            <path d="M108 0L216 62 216 186 108 248 0 186 0 62Z" fill="#a9d4ea"/>
            <path d="M108 0L216 62 216 110Q180 50 50 40Z" fill="#c0dded"/>
            <path d="M160 30L216 62 216 186 140 150Q190 110 160 30Z" fill="#7cc5e8"/>
            <path d="M216 186L108 248 50 170Q150 200 216 130Z" fill="#6bb8e0"/>
            <path d="M108 248L0 186 0 120Q20 190 108 205Z" fill="#94cbe8"/>
            <path d="M108 55L170 90 170 160 108 195 46 160 46 90Z" fill="#d1d3d5"/>
            <path d="M108 70L158 98 108 128 60 98Z" fill="#a5d3ee"/>
            <path d="M60 98L108 128 108 180 60 152Z" fill="#9acdee"/>
            <path d="M158 98L108 128 108 180 158 152Z" fill="#6bb7e0"/>
          </svg>
          <div class="wmtext"><span class="wm1">3D世界网</span><span class="wm2">WWW.3DSJW.COM</span></div>
        </div>
      </div>
    </section>

    <div class="dlg">
      <div class="dlgtitle"><svg class="dlggear"><use href="#gear"/></svg><span>图层设置</span>
        <svg class="dlgicon dlg-reset" viewBox="0 0 14 14"><path d="M7 2a5 5 0 1 1-4.500 3" fill="none" stroke="#fff" stroke-width="1.800"/><path d="M3 1l5 1-3 3z" fill="#fff"/></svg>
        <svg class="dlgicon" viewBox="0 0 14 14"><path d="M2 2l10 10M12 2L2 12" stroke="#fff" stroke-width="2"/></svg>
      </div>
      <div class="dlgbody">
        <section class="sec sec1">
          <div class="sechead"><span>查找以下对象所在的图层</span><svg class="chev"><use href="#chevup"/></svg></div>
          <div class="pick"><span class="pickfield">选择对象 (0)</span><span class="pickbtn"><svg><use href="#cross"/></svg></span></div>
        </section>
        <section class="sec sec2">
          <div class="sechead"><span>工作层</span><svg class="chev"><use href="#chevup"/></svg></div>
          <div class="frow fr-work"><span>工作层</span><span class="inp"><span class="inpsel">25</span></span></div>
        </section>
        <section class="sec sec3">
          <div class="sechead"><span>图层</span><svg class="chev"><use href="#chevup"/></svg></div>
          <div class="frow fr-range"><span class="lbl2">按范围/类别选择图层</span><span class="inp"></span></div>
          <div class="frow fr-cat"><i class="bigcb"></i><span>类别显示</span></div>
          <div class="frow fr-filter"><span class="lbl2 dim">类别过滤器</span><span class="combo dimc"><span>*</span><i class="dd gray"></i></span></div>
          <div class="ltable">
            <div class="lthead"><span class="c1">名称<i class="sortup"></i></span><span class="c2">仅可见</span><span class="c3">对象数</span><span class="c4">类别</span></div>
            <div class="ltmid">
              <i class="vl ltvl"></i>
              <div class="ltrows">
                <div class="ltrow"><span class="c1"><i class="dot d8"></i><i class="sq"></i><span class="num">11</span></span><span class="c2"><i class="sq"></i></span><span class="c3">18</span><span class="c4">01_BODY</span></div>
                <div class="ltrow"><span class="c1"><i class="dot d8"></i><i class="sq"></i><span class="num">12</span></span><span class="c2"><i class="sq"></i></span><span class="c3">34</span><span class="c4">01_BODY</span></div>
                <div class="ltrow"><span class="c1"><i class="dot d8"></i><i class="sq"></i><span class="num">13</span></span><span class="c2"><i class="sq"></i></span><span class="c3">21</span><span class="c4">01_BODY</span></div>
                <div class="ltrow"><span class="c1"><i class="dot d8"></i><i class="sq"></i><span class="num">14</span></span><span class="c2"><i class="sq"></i></span><span class="c3">17</span><span class="c4">01_BODY</span></div>
                <div class="ltrow"><span class="c1"><i class="dot d8"></i><i class="sq"></i><span class="num">20</span></span><span class="c2"><i class="sq"></i></span><span class="c3">156</span><span class="c4">01_BODY</span></div>
                <div class="ltrow bold"><span class="c1"><i class="dot d6"></i><svg class="stk"><use href="#stack"/></svg><span class="num">25(工作)</span></span><span class="c2"></span><span class="c3">359</span><span class="c4">02_SKETCH</span></div>
                <div class="ltrow"><span class="c1"><i class="dot d8"></i><i class="sq"></i><span class="num">61</span></span><span class="c2"><i class="sq"></i></span><span class="c3">8</span><span class="c4">03_DATUM</span></div>
                <div class="ltrow"><span class="c1"><i class="dot d8"></i><i class="sq"></i><span class="num">200</span></span><span class="c2"><i class="sq"></i></span><span class="c3">8</span><span class="c4">RESERVED</span></div>
                <div class="ltrow"><span class="c1"><i class="dot d8"></i><i class="sq"></i><span class="num">253</span></span><span class="c2"><i class="sq"></i></span><span class="c3">15</span><span class="c4">RESERVED</span></div>
                <div class="ltrow ltblank"><span class="c1"></span><span class="c2"></span><span class="c3"></span><span class="c4"></span></div>
              </div>
              <div class="vscroll"><i class="arr up"></i><i class="vthumb"></i><i class="arr down"></i></div>
            </div>
            <div class="hscroll"><i class="arr left"></i><i class="hthumb"></i><i class="arr right"></i></div>
          </div>
          <div class="frow fr-show"><span>显示</span><span class="combo"><span>含有对象的图层</span><i class="dd"></i></span></div>
          <div class="frow fr-add"><span>添加类别</span><span class="addbtn"><svg><use href="#stack"/></svg></span></div>
          <div class="subgroup"><span>图层控制</span><svg class="chev"><use href="#chevdn"/></svg></div>
        </section>
        <section class="sec sec4">
          <div class="sechead"><span>设置</span><svg class="chev"><use href="#chevdn"/></svg></div>
        </section>
        <div class="dlgfoot"><button class="closebtn">关闭</button></div>
      </div>
    </div>
  </main>
</div>
</body>
</html>
```
FILE: styles.css
```css
* { box-sizing: border-box; }
html, body { margin: 0; height: 100%; overflow: hidden; }
body { font-family: "Noto Sans", "Noto Sans CJK SC", sans-serif; font-size: 15px; color: #222; background: #fff; }
i { font-style: normal; display: block; flex: none; }
svg { flex: none; display: block; }
.sprite { position: absolute; width: 0; height: 0; }
.app { position: relative; display: flex; flex-direction: column; width: 1845px; height: 1008px; overflow: hidden; }

.titlebar { height: 30px; display: flex; align-items: center; flex: none; }
.nxlogo { font-family: "Liberation Sans", sans-serif; font-weight: 700; font-size: 26px; color: #8fa1b1; margin-left: 4px; width: 40px; letter-spacing: -0.3px; }
.nxsep { width: 1px; height: 26px; background: #ddd; margin-left: 2px; }
.apptitle { font-size: 15px; margin-left: 5px; color: #111; letter-spacing: .3px; }
.siemens { margin-left: auto; margin-right: 30px; font-family: "Liberation Sans", sans-serif; font-weight: 700; font-size: 15px; color: #119aa8; }

.menubar { height: 31px; flex: none; display: flex; align-items: center; background: #55a0ba; color: #1c2a30; font-size: 14px; white-space: nowrap; position: relative; padding: 0 0 2px 14px; }
.menugrip { position: absolute; left: 3px; top: 3px; width: 3px; height: 25px; background: repeating-linear-gradient(#cfdfe6 0 2px, transparent 2px 4px); }
.mi { margin-right: 15px; }
.mi.m-pref { margin-left: 6px; }

.tb { display: flex; align-items: center; width: fit-content; flex: none; border-bottom: 2px solid #e3e3e3; padding-top: 2px; }
.tb1 { height: 36px; }
.tb2 { height: 34px; }
.tb3 { height: 34px; border-bottom: 0; padding-top: 3px; }
.m1 { margin-left: 1px; } .m2 { margin-left: 2px; } .m3 { margin-left: 3px; } .m4 { margin-left: 4px; } .m5 { margin-left: 5px; }
.m6 { margin-left: 6px; } .m7 { margin-left: 7px; } .m8 { margin-left: 8px; } .m9 { margin-left: 9px; } .m10 { margin-left: 10px; }
.ic { width: 22px; height: 22px; }
.ic.w24 { width: 24px; }
.ig { width: 18px; height: 18px; }
.grip { width: 3px; height: 28px; background: repeating-linear-gradient(#b0b0b0 0 2px, transparent 2px 4px); }
.sep { width: 1px; height: 28px; background: #d8d8d8; }
.dd { width: 0; height: 0; border-left: 4px solid transparent; border-right: 4px solid transparent; border-top: 5px solid #111; }
.dd.gray { border-top-color: #bdbdbd; }
.tbtext { font-size: 14px; width: 28px; white-space: nowrap; }
.blankbox { width: 20px; height: 22px; border: 1px solid #aaa; background: #fff; }
.cmdsearch { width: 156px; height: 23px; border: 1px solid #aaa; font-size: 14px; display: flex; align-items: center; justify-content: space-between; padding: 0 3px 0 1px; }
.magic { width: 16px; height: 16px; }
.sel { display: flex; align-items: center; justify-content: space-between; height: 24px; border: 2px solid #b4b4b4; padding: 0 7px 0 2px; font-size: 14px; }
.sel1 { width: 166px; }
.sel2 { width: 176px; }

.work { flex: 1; display: flex; border-top: 2px solid #999; min-height: 0; }

.rail { width: 32px; flex: none; background: #dfdfdf; border-right: 1px solid #a8a8a8; position: relative; }
.railgear { position: absolute; left: 7px; top: 5px; width: 16px; height: 16px; color: #333; }
.railbtn { position: absolute; left: 2px; width: 30px; display: flex; justify-content: center; align-items: center; }
.railbtn svg { width: 24px; height: 26px; }
.rb-assy { top: 52px; height: 26px; }
.rb-active { top: 83px; height: 44px; background: #fff; border: 1px solid #aaa; border-right: 0; border-radius: 2px 0 0 2px; }
.rb-books { top: 135px; height: 26px; }
.rb-info { top: 187px; height: 26px; }
.rb-doc { top: 243px; height: 26px; }
.rb-clock { top: 297px; height: 26px; }
.rb-tool { top: 338px; height: 28px; }

.nav { width: 654px; flex: none; display: flex; flex-direction: column; border-right: 1px solid #999; min-height: 0; }
.navhead { height: 31px; flex: none; display: flex; align-items: center; justify-content: space-between; padding: 0 15px 0 10px; font-size: 15px; }
.maxbox { width: 14px; height: 13px; border: 1.500px solid #222; border-top-width: 3px; margin-top: 4px; }
.tree { margin-left: 6px; flex: none; height: 728px; display: flex; flex-direction: column; border-left: 2px solid #ddd; border-top: 1px solid #ddd; overflow: hidden; }
.treehead { height: 25px; flex: none; display: flex; align-items: center; background: #efefef; border-bottom: 1px solid #ddd; font-size: 15px; }
.treehead span { display: flex; align-items: center; height: 100%; padding: 0 0 2px 6px; border-right: 1px solid #ddd; }
.th-name { width: 200px; }
.th-new { width: 100px; }
.th-note { flex: 1; border-right: 0 !important; }
.sortup { width: 0; height: 0; border-left: 6px solid transparent; border-right: 6px solid transparent; border-bottom: 6px solid #111; margin-left: 18px; }
.treebody { position: relative; flex: 1; overflow: hidden; }
.rows { display: flex; flex-direction: column; }
.row { height: 24px; flex: none; display: flex; align-items: stretch; border-bottom: 1px solid #ececec; }
.row:nth-child(even) { background: #f9f9f9; }
.nm { width: 200px; flex: none; display: flex; align-items: center; border-right: 1px solid #e8e8e8; white-space: nowrap; overflow: hidden; }
.nw { width: 100px; flex: none; display: flex; align-items: center; padding-left: 6px; border-right: 1px solid #e8e8e8; }
.l0 { padding-left: 4px; }
.l1 { padding-left: 23px; }
.l2 { padding-left: 48px; }
.lh { padding-left: 29px; }
.exp { width: 11px; height: 11px; border: 1px solid #cfcfcf; background: #fff; position: relative; }
.exp::before { content: ""; position: absolute; left: 1px; right: 1px; top: 4px; height: 1px; background: #111; }
.exp.plus::after { content: ""; position: absolute; top: 1px; bottom: 1px; left: 4px; width: 1px; background: #111; }
.dot { border-top: 1px dotted #999; height: 0; }
.d4 { width: 4px; } .d6 { width: 6px; } .d7 { width: 7px; } .d8 { width: 8px; } .d11 { width: 11px; } .d12 { width: 12px; }
.ok { width: 13px; height: 13px; }
.upd { width: 16px; height: 16px; margin-left: -2px; }
.qm { width: 11px; height: 15px; margin-left: 1px; }
.ti { width: 16px; height: 16px; }
.ti1 { margin-left: 1px; }
.ti2 { margin-left: 2px; }
.ti3 { margin-left: 3px; }
.ti-last { margin-top: -20px; margin-left: 14px; }
.tx { display: block; }
.tx2 { margin-left: 2px; }
.tx3 { margin-left: 3px; }
.off { color: #a3a3a3; }
.cb { width: 13px; height: 13px; border: 1px solid #111; background: #fff; display: flex; align-items: center; justify-content: center; }
.cb .ok { width: 11px; height: 11px; }
.vl { position: absolute; width: 0; border-left: 1px dotted #999; }
.vl0 { left: 7px; top: 0; bottom: 0; }
.vl1 { left: 27px; top: 20px; height: 216px; }
.vl2 { left: 46px; top: 44px; height: 62px; }
.vl3 { left: 46px; top: 164px; height: 38px; }
.vl4 { left: 27px; top: 310px; bottom: 0; }

.splitter { height: 5px; flex: none; margin: 0 0 2px 6px; background: #cfcfcf; border-bottom: 1px solid #aaa; border-top: 1px solid #aaa; }
.panel { height: 28px; flex: none; margin-left: 7px; margin-right: 9px; border-bottom: 3px solid #d4d4d4; display: flex; align-items: center; justify-content: space-between; padding: 0 6px 0 6px; font-size: 18px; color: #1b7a9e; }
.panel-first { height: 29px; }
.panel:last-child { border-bottom: 0; }
.chev { width: 16px; height: 12px; }

.gfx { flex: 1; min-width: 0; display: flex; flex-direction: column; }
.tabstrip { height: 26px; flex: none; background: #fff; border-bottom: 2px solid #55a0ba; }
.tab { width: 146px; height: 26px; background: #55a0ba; color: #fff; display: flex; align-items: center; padding-left: 7px; font-size: 16px; white-space: nowrap; }
.tabicon { width: 16px; height: 16px; }
.tab span { margin-left: 4px; }
.tabdoc { width: 11px; height: 11px; margin-left: 6px; }
.tabx { width: 9px; height: 9px; margin-left: 6px; }
.canvas { flex: 1; position: relative; background: #d1d3d5; overflow: hidden; }
.axis-h { position: absolute; left: 0; right: 0; top: 126px; height: 1px; background: repeating-linear-gradient(90deg, #777 0 12px, transparent 12px 19px); }
.axis-v { position: absolute; top: 0; bottom: 0; left: 160px; width: 1px; background: repeating-linear-gradient(#777 0 9px, transparent 9px 18px); }
.model { position: absolute; top: 167px; width: 450px; height: 300px; shape-rendering: crispEdges; }
.model-a { left: 264px; }
.model-b { left: 714px; }
.cnctext { position: absolute; left: 11px; bottom: -12px; font-size: 14px; color: #f0a050; }
.wm { position: absolute; left: 877px; top: 720px; display: flex; align-items: center; }
.wmlogo { width: 72px; height: 83px; }
.wmtext { display: flex; flex-direction: column; margin-left: 8px; font-family: "Liberation Sans", "Noto Sans CJK SC", sans-serif; color: #e6e7e9; white-space: nowrap; }
.wm1 { font-size: 40px; font-weight: 700; line-height: 42px; letter-spacing: 1px; }
.wm2 { font-size: 13px; line-height: 14px; letter-spacing: 3.600px; margin-top: 4px; font-weight: 700; }

.dlg { position: absolute; left: 400px; top: 193px; width: 525px; height: 762px; background: #eee; display: flex; flex-direction: column; }
.dlgtitle { height: 27px; flex: none; background: #55a0ba; color: #fff; display: flex; align-items: center; padding: 0 11px 0 8px; font-size: 18px; }
.dlggear { width: 14px; height: 14px; color: #fff; }
.dlgtitle > span { margin-left: 9px; padding-bottom: 2px; }
.dlgicon { width: 14px; height: 14px; margin-left: 10px; }
.dlg-reset { margin-left: auto; }
.dlgbody { flex: 1; padding: 4px 6px 0 5px; display: flex; flex-direction: column; }
.sec { background: #fff; border-bottom: 2px solid #cdcdcd; margin-bottom: 3px; flex: none; padding: 0 9px; }
.sec1 { height: 75px; }
.sec2 { height: 69px; }
.sec3 { height: 500px; }
.sec4 { height: 28px; }
.sechead { display: flex; align-items: center; justify-content: space-between; height: 30px; margin: 0 -3px 0 -2px; font-size: 18px; color: #1b7a9e; }
.sechead > span { padding-bottom: 2px; }
.sec1 .sechead { height: 28px; }
.sec4 .sechead { height: 28px; }
.pick { display: flex; margin-top: 6px; height: 32px; gap: 2px; }
.pickfield { flex: 1; background: #ffdf78; display: flex; align-items: center; padding-bottom: 2px; }
.pickbtn { width: 32px; background: #ffdf78; display: flex; align-items: center; justify-content: center; }
.pickbtn svg { width: 20px; height: 20px; }
.frow { display: flex; align-items: center; justify-content: space-between; }
.frow > span:first-child, .fr-cat > span { padding-bottom: 2px; }
.lbl2 { margin-left: 2px; }
.dim { color: #b5b5b5; }
.fr-work { margin-top: 4px; height: 26px; }
.inp { width: 90px; height: 26px; border: 2px solid #aaa; padding: 2px 2px 2px 3px; display: flex; }
.inpsel { flex: 1; background: #3399ff; color: #d8ecff; text-align: right; font-size: 17px; line-height: 18px; padding-right: 1px; border-left: 1px solid #a55; }
.fr-range { margin-top: 4px; height: 26px; }
.fr-cat { margin-top: 5px; height: 18px; justify-content: flex-start; gap: 4px; }
.bigcb { width: 18px; height: 18px; border: 2px solid #888; background: linear-gradient(135deg, #ddd, #f8f8f8); }
.fr-filter { margin-top: 6px; height: 27px; }
.combo { width: 152px; height: 100%; border: 1px solid #999; display: flex; align-items: center; justify-content: space-between; padding: 0 8px 2px 4px; }
.combo .dd { margin-top: 2px; }
.dimc { border-color: #d4d4d4; color: #999; }
.ltable { margin-top: 3px; height: 278px; border: 2px solid #ddd; display: flex; flex-direction: column; }
.lthead { height: 23px; flex: none; display: flex; align-items: center; background: #efefef; border-bottom: 1px solid #ddd; }
.lthead span { height: 100%; display: flex; align-items: center; border-right: 1px solid #ddd; padding-bottom: 2px; }
.lthead .c4 { border-right: 0; flex: 1; width: auto; }
.c1 { width: 150px; flex: none; padding-left: 6px; }
.c2 { width: 85px; flex: none; padding-left: 6px; }
.c3 { width: 150px; flex: none; padding-left: 5px; }
.c4 { width: 87px; flex: none; padding-left: 5px; white-space: nowrap; overflow: hidden; }
.lthead .c3, .lthead .c4 { padding-left: 6px; }
.lthead .sortup { margin-left: 18px; }
.ltmid { flex: 1; display: flex; position: relative; min-height: 0; }
.ltvl { left: 9px; top: 0; height: 208px; }
.ltrows { width: 472px; flex: none; display: flex; flex-direction: column; }
.ltrow { height: 24px; flex: none; display: flex; align-items: center; border-bottom: 1px solid #ececec; }
.ltrow:nth-child(odd) { background: #f9f9f9; }
.ltrow > span { height: 100%; display: flex; align-items: center; border-right: 1px solid #e8e8e8; }
.ltrow .c1 { border-right: 2px solid #111; padding-left: 12px; }
.ltrow.ltblank { height: 15px; border-bottom: 0; background: #fff; }
.bold { font-weight: 700; }
.sq { width: 13px; height: 13px; border: 1.500px solid #111; background: #fff; }
.c1 > .sq { margin-left: 1px; }
.num { margin-left: 5px; }
.stk { width: 18px; height: 18px; }
.bold .num { margin-left: 2px; }
.vscroll { flex: 1; background: #f4f4f4; display: flex; flex-direction: column; align-items: center; position: relative; }
.arr { width: 0; height: 0; position: absolute; }
.arr.up { top: 8px; border-left: 4px solid transparent; border-right: 4px solid transparent; border-bottom: 4px solid #666; }
.arr.down { bottom: 10px; border-left: 4px solid transparent; border-right: 4px solid transparent; border-top: 4px solid #666; }
.arr.left { left: 9px; top: 6px; border-top: 4px solid transparent; border-bottom: 4px solid transparent; border-right: 4px solid #666; }
.arr.right { right: 30px; top: 6px; border-top: 4px solid transparent; border-bottom: 4px solid transparent; border-left: 4px solid #666; }
.vthumb { position: absolute; top: 89px; width: 18px; height: 120px; border: 1px solid #aaa; border-radius: 2px; background: linear-gradient(90deg, #e4e4e4, #c8c8c8); }
.vthumb::after { content: ""; position: absolute; left: 4px; right: 4px; top: 54px; height: 9px; background: repeating-linear-gradient(#666 0 1px, transparent 1px 3px); }
.hscroll { height: 21px; flex: none; background: #f4f4f4; position: relative; }
.hthumb { position: absolute; left: 22px; top: 1px; width: 375px; height: 18px; border: 1px solid #999; border-radius: 2px; background: linear-gradient(#e4e4e4, #c4c4c4); }
.hthumb::after { content: ""; position: absolute; top: 4px; bottom: 4px; left: 181px; width: 9px; background: repeating-linear-gradient(90deg, #666 0 1px, transparent 1px 3px); }
.fr-show { margin-top: 3px; height: 28px; }
.fr-add { margin-top: 2px; height: 32px; }
.addbtn { width: 32px; height: 32px; border: 2px solid #aaa; display: flex; align-items: center; justify-content: center; }
.addbtn svg { width: 24px; height: 24px; }
.subgroup { margin-top: 2px; height: 27px; background: #eee; border: 2px solid #ddd; display: flex; align-items: center; justify-content: space-between; padding: 0 4px 2px 7px; color: #1b7a9e; font-size: 15px; }
.subgroup .chev { width: 13px; height: 10px; }
.dlgfoot { display: flex; justify-content: flex-end; margin-top: 8px; padding-right: 10px; }
.closebtn { width: 60px; height: 28px; border: 0; background: #72b3c8; color: #fff; font-family: inherit; font-size: 15px; padding: 0 0 2px; }
```
